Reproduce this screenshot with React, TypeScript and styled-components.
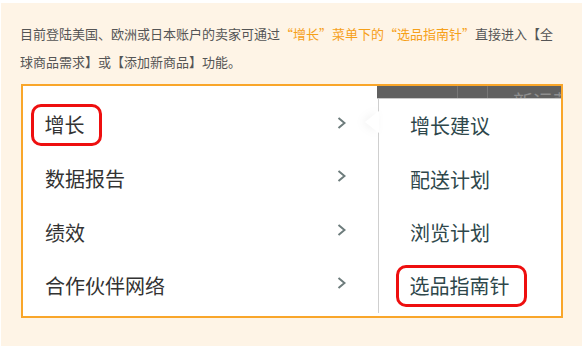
import styled, { createGlobalStyle } from 'styled-components'

const GlobalStyle = createGlobalStyle`
  html, body {
    margin: 0;
    padding: 0;
    background: #ffffff;
  }
  body {
    font-family: "Noto Sans CJK SC", "Noto Sans", sans-serif;
  }
`

const Page = styled.div`
  margin-top: 3px;
  margin-left: 1px;
  height: 343px;
  background: #fef4e6;
  padding: 17px 20px 0 19px;
  box-sizing: border-box;
`

const Intro = styled.p`
  margin: 0;
  font-size: 13px;
  line-height: 28px;
  color: #555555;
  white-space: nowrap;
`

const Accent = styled.span`
  color: #f6a019;
`

const Figure = styled.div`
  margin: 8px 0 0 1px;
  width: 542px;
  height: 234px;
  box-sizing: border-box;
  border: 2px solid #f9a62a;
  background: #ffffff;
  display: grid;
  grid-template-columns: 355px 1fr;
  overflow: hidden;
`

const MainMenu = styled.ul`
  list-style: none;
  margin: 0;
  padding: 12.5px 0 0 0;
`

const Row = styled.li`
  height: 53.5px;
  display: flex;
  align-items: center;
  justify-content: space-between;
  padding: 0 32px 0 22px;
  font-size: 20px;
  color: #333333;
`

const Chevron = styled.svg`
  width: 9px;
  height: 12px;
  margin-top: -5px;
  flex: none;
`

const Highlight = styled.span`
  display: inline-block;
  border: 3.5px solid #ee0f0f;
  border-radius: 10px;
  line-height: 36px;
  padding: 0 14px 0 10.5px;
  margin-left: -14px;
`

const SubPanel = styled.div`
  position: relative;
  display: flex;
  flex-direction: column;
`

const SubHeader = styled.div`
  height: 12px;
  margin-left: -1px;
  background: #606060;
  border-bottom: 1px solid #c8c8c8;
  display: grid;
  grid-template-columns: 81px 30px 1fr;
  overflow: hidden;
`

const HeaderCell = styled.div`
  border-right: 1px solid #777777;
  &:last-child {
    border-right: none;
  }
`

const HeaderText = styled.div`
  font-size: 20px;
  line-height: 20px;
  margin: 6px 0 0 25px;
  color: #8e8e8e;
  white-space: nowrap;
`

const SubMenu = styled.ul`
  list-style: none;
  margin: 0;
  padding: 0;
  border-left: 1px solid #cfcfcf;
  flex: 1;
  margin-bottom: 6px;
`

const SubRow = styled.li`
  height: 53.5px;
  display: flex;
  align-items: center;
  padding-left: 31px;
  font-size: 20px;
  color: #2e474b;
`

const Notch = styled.div`
  position: absolute;
  left: -13px;
  top: 25px;
  width: 0;
  height: 0;
  border-top: 11px solid transparent;
  border-bottom: 11px solid transparent;
  border-right: 14px solid #ffffff;
  filter: drop-shadow(-3px 0 4px rgba(0, 0, 0, 0.05));
`

const ScrollMark = styled.div`
  position: absolute;
  right: 1px;
  bottom: 6px;
  width: 2px;
  height: 11px;
  background: #9a9a9a;
`

const mainItems = ['增长', '数据报告', '绩效', '合作伙伴网络']
const subItems = ['增长建议', '配送计划', '浏览计划', '选品指南针']

function Arrow() {
  return (
    <Chevron viewBox="0 0 9 12">
      <polyline points="1.5,1 7.5,6 1.5,11" fill="none" stroke="#6d7c7c" strokeWidth="2" />
    </Chevron>
  )
}

export default function App() {
  return (
    <>
      <GlobalStyle />
      <Page>
        <Intro>
          目前登陆美国、欧洲或日本账户的卖家可通过<Accent>“增长”菜单下的“选品指南针”</Accent>直接进入【全
          <br />
          球商品需求】或【添加新商品】功能。
        </Intro>
        <Figure>
          <MainMenu>
            {mainItems.map((item, i) => (
              <Row key={item}>
                {i === 0 ? <Highlight>{item}</Highlight> : <span>{item}</span>}
                <Arrow />
              </Row>
            ))}
          </MainMenu>
          <SubPanel>
            <SubHeader>
              <HeaderCell />
              <HeaderCell />
              <HeaderCell>
                <HeaderText>新运营</HeaderText>
              </HeaderCell>
            </SubHeader>
            <SubMenu>
              {subItems.map((item, i) => (
                <SubRow key={item}>
                  {i === subItems.length - 1 ? <Highlight>{item}</Highlight> : item}
                </SubRow>
              ))}
            </SubMenu>
            <Notch />
            <ScrollMark />
          </SubPanel>
        </Figure>
      </Page>
    </>
  )
}
